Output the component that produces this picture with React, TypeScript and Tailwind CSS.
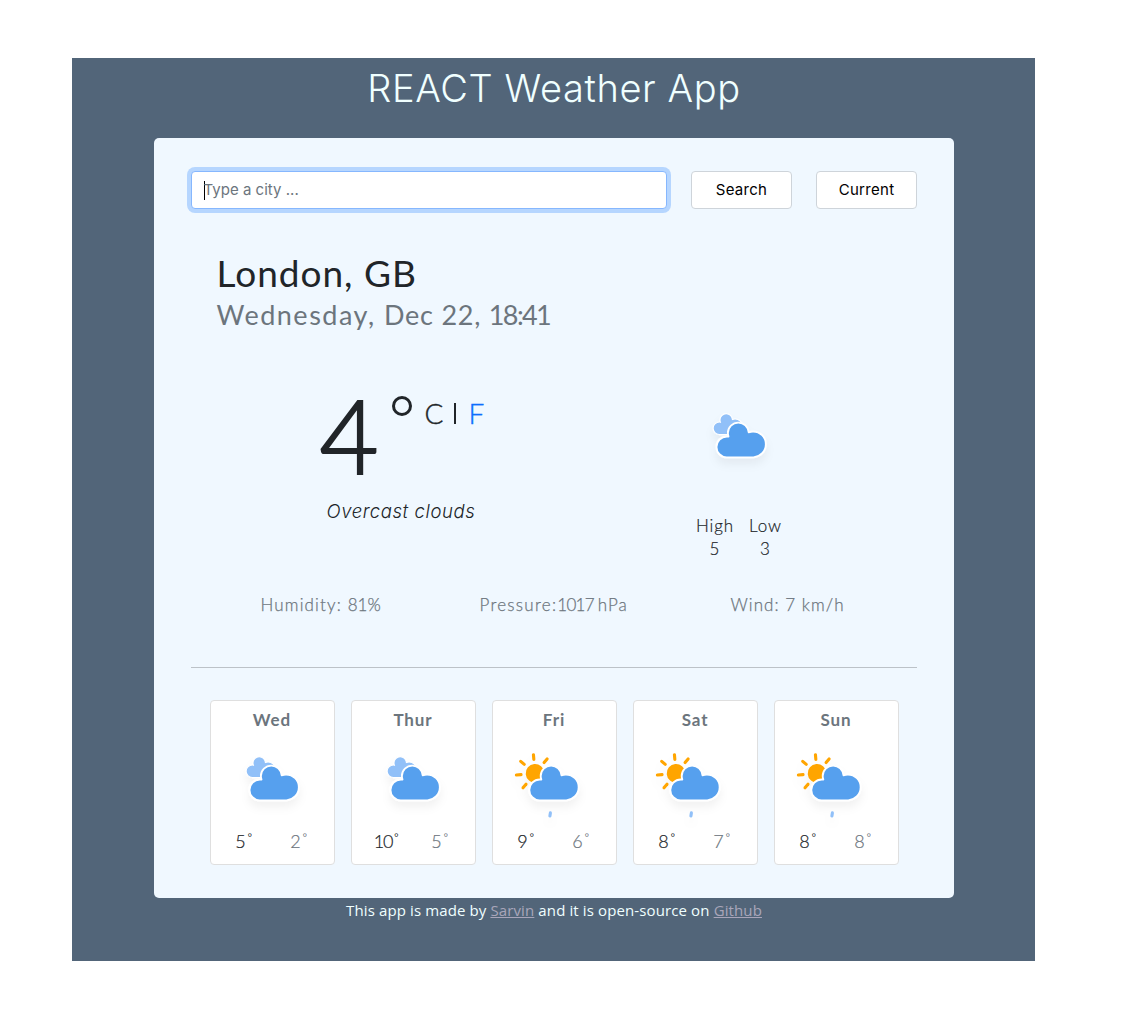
const CLOUD =
  'M47.7,35.4c0-4.6-3.7-8.2-8.2-8.2c-1,0-1.9,0.2-2.8,0.5c-0.3-3.4-3.1-6.2-6.6-6.2c-3.7,0-6.7,3-6.7,6.7c0,0.8,0.2,1.6,0.4,2.3c-0.3-0.1-0.7-0.1-1-0.1c-3.7,0-6.7,3-6.7,6.7c0,3.6,2.9,6.6,6.5,6.7l17.2,0C44.2,43.3,47.7,39.8,47.7,35.4z';

type Weather = 'cloudy' | 'rainy';

function WeatherIcon({ kind }: { kind: Weather }) {
  return (
    <svg width="100" height="100" viewBox="0 0 64 64" className="block shrink-0 overflow-visible">
      <defs>
        <filter id="soft-shadow" x="-30%" y="-30%" width="170%" height="180%">
          <feDropShadow dx="0" dy="4" stdDeviation="2.6" floodColor="#000" floodOpacity="0.05" />
        </filter>
      </defs>
      <g filter="url(#soft-shadow)">
        {kind === 'cloudy' ? (
          <path d={CLOUD} fill="#91C0F8" stroke="#fff" strokeWidth="1.2" transform="translate(4.5 1.6) scale(0.6)" />
        ) : (
          <g transform="translate(18.6 25.2) rotate(-5)" stroke="orange" strokeWidth="2">
            {[0, 45, 90, 135, 180, 225, 270, 315].map((a) => (
              <line key={a} y1="9" y2="12" strokeLinecap="round" transform={`rotate(${a})`} />
            ))}
            <circle r="5" fill="orange" />
          </g>
        )}
        <path
          d={CLOUD}
          fill="#57A0EE"
          stroke="#fff"
          strokeWidth="1.2"
          strokeLinejoin="round"
          transform={kind === 'cloudy' ? 'translate(0.2 -1.3)' : 'translate(-1.2 -1.3)'}
        />
        {kind === 'rainy' && (
          <line x1="28.4" y1="50.5" x2="28.1" y2="52.5" stroke="#91C0F8" strokeWidth="2" strokeLinecap="round" />
        )}
      </g>
    </svg>
  );
}

const days: { name: string; kind: Weather; hi: string; lo: string }[] = [
  { name: 'Wed', kind: 'cloudy', hi: '5', lo: '2' },
  { name: 'Thur', kind: 'cloudy', hi: '10', lo: '5' },
  { name: 'Fri', kind: 'rainy', hi: '9', lo: '6' },
  { name: 'Sat', kind: 'rainy', hi: '8', lo: '7' },
  { name: 'Sun', kind: 'rainy', hi: '8', lo: '8' },
];

export default function App() {
  return (
    <div className="h-[1034px] w-[1134px] overflow-hidden bg-white pl-[72px] pt-[58px] font-['Lato',sans-serif] text-[#212529]">
      <div className="flex h-[903px] w-[963px] flex-col items-center bg-[#526579]">
        <h1 className="h-20 whitespace-nowrap pt-[6px] pl-px font-['Inter',sans-serif] text-[38px] font-light leading-[48px] tracking-[0.6px] text-[#f0ffff]">
          REACT Weather App
        </h1>

        <main className="h-[760px] w-[800px] rounded-[5px] bg-[#f0f8ff] px-[37px] pt-[33px]">
          <form className="flex h-[38px] gap-6 font-['Inter',sans-serif] text-[15px]">
            <div className="flex w-[476px] items-center rounded-[4px] border border-[#86b7fe] bg-white pl-3 text-[#6c757d] shadow-[0_0_0_4px_#b6d6ff]">
              <span className="-mr-px h-[19px] w-px bg-black" />
              <span className="tracking-[0.02px]">Type a city ...</span>
            </div>
            <button type="button" className="w-[101px] rounded-[4px] border border-[#ced4da] bg-white pl-px tracking-[0.3px] text-black">
              Search
            </button>
            <button type="button" className="w-[101px] rounded-[4px] border border-[#ced4da] bg-white pl-px tracking-[0.3px] text-black">
              Current
            </button>
          </form>

          <header className="ml-[26px] mt-[42px] whitespace-nowrap">
            <h2 className="h-[45px] text-[37px] leading-[44px] tracking-[1px]">London, GB</h2>
            <p className="h-[37px] text-[27px] leading-[37px] text-[#6c757d]">
              <span className="tracking-[1.5px]">Wednesday, </span>
              <span className="tracking-[0.75px]">Dec 22, </span>
              <span className="tracking-[-1.6px]">18:41</span>
            </p>
          </header>

          <section className="flex h-[230px] pt-[56px]">
            <div className="ml-[129px] w-[376px]">
              <div className="flex h-[98px] whitespace-nowrap">
                <span className="-mt-[7px] w-[69px] text-[102px] font-light leading-[106px] [-webkit-text-stroke:2px_#212529]">4</span>
                <span className="ml-[3px] mt-[7px] h-[20px] w-[20px] rounded-full border-[3.5px] border-[#212529]" />
                <span className="ml-[13px] mt-[4px] flex text-[28px] font-light leading-[40px] [-webkit-text-stroke:0.4px_currentColor]">
                  <span className="w-[28px]">C</span>
                  <span className="w-[16px]">
                    <span className="ml-px mt-[10px] block h-[21px] w-[2px] bg-[#212529]" />
                  </span>
                  <span className="text-[#0d6efd]">F</span>
                </span>
              </div>
              <p className="ml-[7px] mt-[12px] whitespace-nowrap font-['Inter',sans-serif] text-[18.5px] font-light italic leading-[24px] tracking-[0.6px]">
                Overcast clouds
              </p>
            </div>
            <div className="flex w-[100px] flex-col">
              <div className="-ml-[5px] mt-[2px]">
                <WeatherIcon kind="cloudy" />
              </div>
              <div className="mt-[23px] flex whitespace-nowrap text-center text-[17px] font-light leading-[23px] tracking-[0.9px] [-webkit-text-stroke:0.2px_currentColor]">
                <span className="w-[39px]">
                  High
                  <br />5
                </span>
                <span className="ml-[12px] w-[38px]">
                  Low
                  <br />3
                </span>
              </div>
            </div>
          </section>

          <div className="mt-[28px] flex h-[76px] whitespace-nowrap pt-[2px] text-[17px] font-light leading-[24px] text-[#6c757d] [-webkit-text-stroke:0.25px_currentColor]">
            <span className="ml-[70px] w-[219px] tracking-[1.15px]">
              Humidity: <span className="tracking-[0px]">81%</span>
            </span>
            <span className="w-[251px] tracking-[1.27px]">
              Pressure:<span className="tracking-[-0.7px]">1017 </span>
              <span className="tracking-[1px]">hPa</span>
            </span>
            <span className="tracking-[1.05px]">Wind: 7 km/h</span>
          </div>
          <hr className="border-t border-[#bcc2c8]" />

          <section className="ml-[19px] mt-8 flex gap-4">
            {days.map((d) => (
              <article key={d.name} className="h-[165px] w-[125px] rounded-[4px] border border-[#dfdfdf] bg-white text-center">
                <h3 className="h-[33px] pt-[7px] text-[17px] font-bold leading-[24px] tracking-[0.9px] text-[#6c757d]">{d.name}</h3>
                <div className="ml-[13px] h-[92px]">
                  <WeatherIcon kind={d.kind} />
                </div>
                <div className="flex text-[18px] font-light leading-[30px] [-webkit-text-stroke:0.2px_currentColor]">
                  <span className="flex w-[67px] justify-center">
                    <span className={d.hi.length > 1 ? 'ml-[3px] tracking-[-1.2px]' : ''}>{d.hi}</span>
                    <sup className="top-0 ml-[2px] text-[10px] leading-[22px]">°</sup>
                  </span>
                  <span className="ml-[-13px] flex w-[71px] justify-center text-[#6c757d]">
                    {d.lo}
                    <sup className="top-0 ml-[2px] text-[10px] leading-[22px]">°</sup>
                  </span>
                </div>
              </article>
            ))}
          </section>
        </main>

        <footer className="whitespace-nowrap pl-px font-['Open_Sans',sans-serif] text-[15px] leading-[25px] tracking-[0.12px] text-[#f0ffff]">
          This app is made by <a className="text-[#a9a5ba] underline">Sarvin</a> and it is open-source on{' '}
          <a className="text-[#a9a5ba] underline">Github</a>
        </footer>
      </div>
    </div>
  );
}
